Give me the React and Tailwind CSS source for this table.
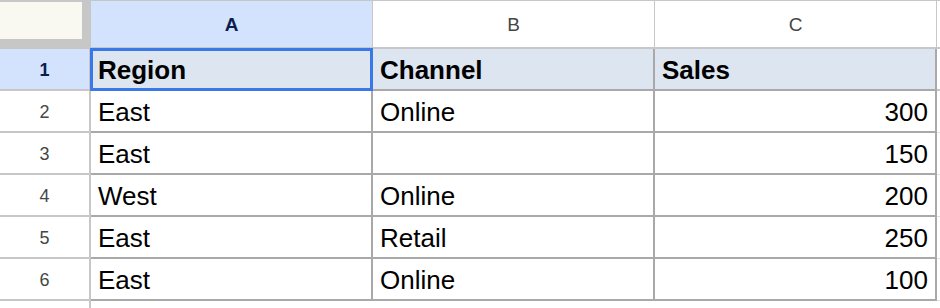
import React from "react";

const rows = [
  ["East", "Online", "300"],
  ["East", "", "150"],
  ["West", "Online", "200"],
  ["East", "Retail", "250"],
  ["East", "Online", "100"],
];

export default function App() {
  return (
    <div
      className="w-[940px] h-[308px] overflow-hidden bg-white"
      style={{ fontFamily: '"Liberation Sans", Arial, sans-serif' }}
    >
      {/* top line */}
      <div className="h-px bg-[#c7c7c7]" />
      {/* column header row */}
      <div className="flex h-[48px]">
        <div className="w-[91px] shrink-0 bg-[#c7c7c7] pt-px">
          <div className="w-[82px] h-[37px] bg-[#f9f9f2]" />
        </div>
        <div className="w-[282px] shrink-0 flex items-center justify-center pt-[3px] bg-[#d3e3fd] border-r border-b-2 border-[#c7c7c7] text-[19px] font-bold text-[#0b1f4f]">
          A
        </div>
        <div className="w-[282px] shrink-0 flex items-center justify-center pt-[3px] bg-white border-r border-b-2 border-[#c7c7c7] text-[19px] text-[#444746]">
          B
        </div>
        <div className="w-[282px] shrink-0 flex items-center justify-center pt-[3px] bg-white border-r border-b-2 border-[#c7c7c7] text-[19px] text-[#444746]">
          C
        </div>
        <div className="flex-1 bg-white border-b-2 border-[#c7c7c7]" />
      </div>
      {/* row 1 */}
      <div className="flex h-[42px]">
        <div className="w-[91px] shrink-0 flex items-center justify-center pt-[2px] bg-[#d3e3fd] border-r-2 border-b-2 border-[#c7c7c7] text-[18px] font-bold text-[#0b1f4f]">
          1
        </div>
        <div className="relative w-[282px] shrink-0 flex items-center px-[7px] pt-[3px] bg-[#dce5f0] border-r-2 border-b-2 border-[#a9a9a9] text-[26px] font-bold text-black">
          Region
          <div className="absolute -left-px -top-px right-[-2px] bottom-[-2px] border-[3px] border-[#3b78e7]" />
        </div>
        <div className="w-[282px] shrink-0 flex items-center px-[7px] pt-[3px] bg-[#dce5f0] border-r-2 border-b-2 border-[#a9a9a9] text-[26px] font-bold text-black">
          Channel
        </div>
        <div className="w-[282px] shrink-0 flex items-center px-[7px] pt-[3px] bg-[#dce5f0] border-r-2 border-b-2 border-[#a9a9a9] text-[26px] font-bold text-black">
          Sales
        </div>
        <div className="flex-1 bg-white border-b-2 border-[#c7c7c7]" />
      </div>
      {rows.map((r, i) => (
        <div key={i} className="flex h-[42px]">
          <div className="w-[91px] shrink-0 flex items-center justify-center pt-[2px] bg-white border-r-2 border-b-2 border-[#c7c7c7] text-[18px] text-[#444746]">
            {i + 2}
          </div>
          <div className="w-[282px] shrink-0 flex items-center px-[7px] pt-[3px] bg-white border-r-2 border-b-2 border-[#a9a9a9] text-[26px] text-black">
            {r[0]}
          </div>
          <div className="w-[282px] shrink-0 flex items-center px-[7px] pt-[3px] bg-white border-r-2 border-b-2 border-[#a9a9a9] text-[26px] text-black">
            {r[1]}
          </div>
          <div className="w-[282px] shrink-0 flex items-center justify-end px-[7px] pt-[3px] bg-white border-r-2 border-b-2 border-[#a9a9a9] text-[26px] text-black">
            {r[2]}
          </div>
          <div className="flex-1 bg-white border-b border-[#e1e1e1]" />
        </div>
      ))}
      <div className="flex h-[20px]">
        <div className="w-[91px] shrink-0 bg-white border-r-2 border-[#c7c7c7]" />
        <div className="flex-1 bg-white" />
      </div>
    </div>
  );
}
